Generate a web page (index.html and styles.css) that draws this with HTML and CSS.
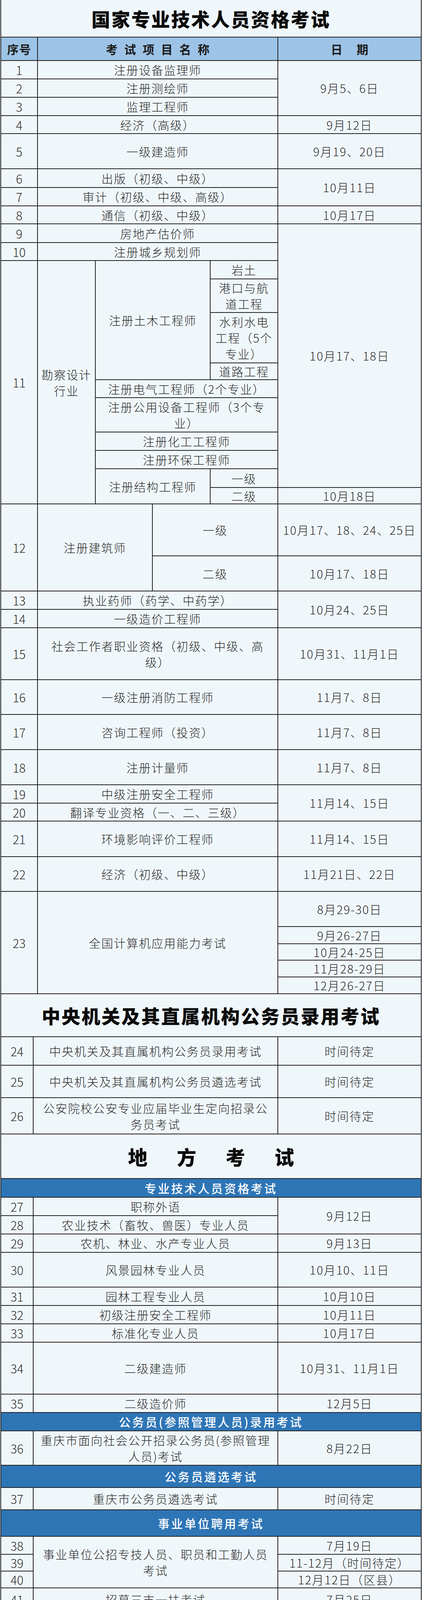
FILE: index.html
```html
<!DOCTYPE html>
<html lang="zh-CN">
<head>
<meta charset="utf-8">
<title>考试时间表</title>
<link rel="stylesheet" href="styles.css">
</head>
<body>
<div class="sheet">
  <div class="title title-top">国家专业技术人员资格考试</div>
  <div class="grid grid-a">
    <div class="cell hd c1">序号</div>
    <div class="cell hd hd-name cn">考试项目名称</div>
    <div class="cell hd hd-date c6">日期</div>

    <div class="cell num c1">1</div><div class="cell cn">注册设备监理师</div><div class="cell c6 r3">9月5、6日</div>
    <div class="cell num c1">2</div><div class="cell cn">注册测绘师</div>
    <div class="cell num c1">3</div><div class="cell cn">监理工程师</div>
    <div class="cell num c1">4</div><div class="cell cn">经济（高级）</div><div class="cell c6">9月12日</div>
    <div class="cell num c1">5</div><div class="cell cn">一级建造师</div><div class="cell c6">9月19、20日</div>
    <div class="cell num c1">6</div><div class="cell cn">出版（初级、中级）</div><div class="cell c6 r2">10月11日</div>
    <div class="cell num c1">7</div><div class="cell cn">审计（初级、中级、高级）</div>
    <div class="cell num c1">8</div><div class="cell cn">通信（初级、中级）</div><div class="cell c6">10月17日</div>
    <div class="cell num c1">9</div><div class="cell cn">房地产估价师</div><div class="cell c6 r11">10月17、18日</div>
    <div class="cell num c1">10</div><div class="cell cn">注册城乡规划师</div>

    <div class="cell num c1 r10">11</div>
    <div class="cell c2 r10">勘察设计<br>行业</div>
    <div class="cell c35 r4">注册土木工程师</div>
    <div class="cell c5">岩土</div>
    <div class="cell c5">港口与航<br>道工程</div>
    <div class="cell c5">水利水电<br>工程（5个<br>专业）</div>
    <div class="cell c5">道路工程</div>
    <div class="cell c36">注册电气工程师（2个专业）</div>
    <div class="cell c36">注册公用设备工程师（3个专<br>业）</div>
    <div class="cell c36">注册化工工程师</div>
    <div class="cell c36">注册环保工程师</div>
    <div class="cell c35 r2">注册结构工程师</div>
    <div class="cell c5">一级</div>
    <div class="cell c5">二级</div><div class="cell c6">10月18日</div>

    <div class="cell num c1 r2">12</div>
    <div class="cell c24 r2">注册建筑师</div>
    <div class="cell c46">一级</div><div class="cell c6">10月17、18、24、25日</div>
    <div class="cell c46">二级</div><div class="cell c6">10月17、18日</div>

    <div class="cell num c1">13</div><div class="cell cn">执业药师（药学、中药学）</div><div class="cell c6 r2">10月24、25日</div>
    <div class="cell num c1">14</div><div class="cell cn">一级造价工程师</div>
    <div class="cell num c1">15</div><div class="cell cn">社会工作者职业资格（初级、中级、高<br>级）</div><div class="cell c6">10月31、11月1日</div>
    <div class="cell num c1">16</div><div class="cell cn">一级注册消防工程师</div><div class="cell c6">11月7、8日</div>
    <div class="cell num c1">17</div><div class="cell cn">咨询工程师（投资）</div><div class="cell c6">11月7、8日</div>
    <div class="cell num c1">18</div><div class="cell cn">注册计量师</div><div class="cell c6">11月7、8日</div>
    <div class="cell num c1">19</div><div class="cell cn">中级注册安全工程师</div><div class="cell c6 r2">11月14、15日</div>
    <div class="cell num c1">20</div><div class="cell cn">翻译专业资格（一、二、三级）</div>
    <div class="cell num c1">21</div><div class="cell cn">环境影响评价工程师</div><div class="cell c6">11月14、15日</div>
    <div class="cell num c1">22</div><div class="cell cn">经济（初级、中级）</div><div class="cell c6">11月21日、22日</div>
    <div class="cell num c1 r5">23</div><div class="cell cn r5">全国计算机应用能力考试</div><div class="cell c6">8月29-30日</div>
    <div class="cell c6">9月26-27日</div>
    <div class="cell c6">10月24-25日</div>
    <div class="cell c6">11月28-29日</div>
    <div class="cell c6">12月26-27日</div>
  </div>

  <div class="title title-mid">中央机关及其直属机构公务员录用考试</div>
  <div class="grid grid-b">
    <div class="cell num c1">24</div><div class="cell c2">中央机关及其直属机构公务员录用考试</div><div class="cell c3">时间待定</div>
    <div class="cell num c1">25</div><div class="cell c2">中央机关及其直属机构公务员遴选考试</div><div class="cell c3">时间待定</div>
    <div class="cell num c1">26</div><div class="cell c2">公安院校公安专业应届毕业生定向招录公<br>务员考试</div><div class="cell c3">时间待定</div>
  </div>

  <div class="title title-local">地方考试</div>
  <div class="grid grid-c">
    <div class="cell band">专业技术人员资格考试</div>
    <div class="cell num c1">27</div><div class="cell c2">职称外语</div><div class="cell c3 r2">9月12日</div>
    <div class="cell num c1">28</div><div class="cell c2">农业技术（畜牧、兽医）专业人员</div>
    <div class="cell num c1">29</div><div class="cell c2">农机、林业、水产专业人员</div><div class="cell c3">9月13日</div>
    <div class="cell num c1">30</div><div class="cell c2">风景园林专业人员</div><div class="cell c3">10月10、11日</div>
    <div class="cell num c1">31</div><div class="cell c2">园林工程专业人员</div><div class="cell c3">10月10日</div>
    <div class="cell num c1">32</div><div class="cell c2">初级注册安全工程师</div><div class="cell c3">10月11日</div>
    <div class="cell num c1">33</div><div class="cell c2">标准化专业人员</div><div class="cell c3">10月17日</div>
    <div class="cell num c1">34</div><div class="cell c2">二级建造师</div><div class="cell c3">10月31、11月1日</div>
    <div class="cell num c1">35</div><div class="cell c2">二级造价师</div><div class="cell c3">12月5日</div>
    <div class="cell band">公务员(参照管理人员)录用考试</div>
    <div class="cell num c1">36</div><div class="cell c2">重庆市面向社会公开招录公务员(参照管理<br>人员)考试</div><div class="cell c3">8月22日</div>
    <div class="cell band">公务员遴选考试</div>
    <div class="cell num c1">37</div><div class="cell c2">重庆市公务员遴选考试</div><div class="cell c3">时间待定</div>
    <div class="cell band">事业单位聘用考试</div>
    <div class="cell num c1">38</div><div class="cell c2 r3">事业单位公招专技人员、职员和工勤人员<br>考试</div><div class="cell c3">7月19日</div>
    <div class="cell num c1">39</div><div class="cell c3">11-12月（时间待定）</div>
    <div class="cell num c1">40</div><div class="cell c3">12月12日（区县）</div>
    <div class="cell num c1">41</div><div class="cell c2">招募三支一扶考试</div><div class="cell c3">7月25日</div>
    <div class="cell num c1">42</div><div class="cell c2">千名高校毕业生下基层助推脱贫攻坚考试</div><div class="cell c3">8月1日</div>
  </div>
</div>
</body>
</html>
```

FILE: styles.css
```css
html, body {
  margin: 0;
  padding: 0;
  background: #f0f7fb;
}

body {
  font-family: "Noto Sans CJK SC", "Noto Sans", sans-serif;
  color: #2a2a2a;
}

.sheet {
  width: 1078px;
  margin-left: 1px;
  border-left: 2px solid #222;
  box-sizing: border-box;
}

.title {
  box-sizing: border-box;
  border-right: 2px solid #222;
  border-bottom: 2px solid #222;
  display: flex;
  align-items: center;
  justify-content: center;
  font-size: 48px;
  font-weight: 900;
  color: #0b0b0b;
  letter-spacing: 3px;
}

.title-top { height: 96px; }
.title-mid { height: 110px; }
.title-local {
  height: 114px;
  font-size: 50px;
  letter-spacing: 75px;
  padding-left: 75px;
}

.grid {
  display: grid;
}

.grid-a {
  grid-template-columns: 94px 148px 146px 148px 173px 367px;
  grid-template-rows:
    60px 47px 47px 47px 46px 90px 48px 47px 46px 48px 46px
    47px 86px 129px 43px 46px 88px 47px 47px 48px 42px
    133px 90px 47px 47px 133px 89px 90px 90px 47px 46px 91px 89px
    90px 44px 42px 43px 43px;
}

.grid-b {
  grid-template-columns: 83px 626px 367px;
  grid-template-rows: 73px 83px 93px;
}

.grid-c {
  grid-template-columns: 83px 626px 367px;
  grid-template-rows:
    48px 47px 47px 47px 89px 47px 47px 47px 133px 47px
    47px 88px 57px 57px 68px 46px 43px 43px 59px 57px;
}

.cell {
  box-sizing: border-box;
  border-right: 2px solid #222;
  border-bottom: 2px solid #222;
  display: flex;
  align-items: center;
  justify-content: center;
  text-align: center;
  font-size: 30px;
  line-height: 41px;
  letter-spacing: 2px;
  font-weight: 300;
  padding: 0 4px;
  min-width: 0;
  min-height: 0;
}

.num {
  font-size: 31px;
  letter-spacing: 0;
}

.hd {
  background: #9dc3e6;
  font-weight: 700;
  color: #1a1a1a;
  letter-spacing: 1px;
}

.hd-name {
  letter-spacing: 17px;
  padding-left: 21px;
}

.hd-date {
  letter-spacing: 36px;
  padding-left: 40px;
}

.band {
  grid-column: 1 / -1;
  background: #2e75b6;
  color: #ffffff;
  font-weight: 500;
  letter-spacing: 4px;
}

.c1 { grid-column: 1; }
.c2 { grid-column: 2; }
.c3 { grid-column: 3; }
.c5 { grid-column: 5; }
.c6 { grid-column: 6; }
.cn { grid-column: 2 / 6; }
.c24 { grid-column: 2 / 4; }
.c35 { grid-column: 3 / 5; }
.c36 { grid-column: 3 / 6; }
.c46 { grid-column: 4 / 6; }

.r2 { grid-row: span 2; }
.r3 { grid-row: span 3; }
.r4 { grid-row: span 4; }
.r5 { grid-row: span 5; }
.r10 { grid-row: span 10; }
.r11 { grid-row: span 11; }
```
